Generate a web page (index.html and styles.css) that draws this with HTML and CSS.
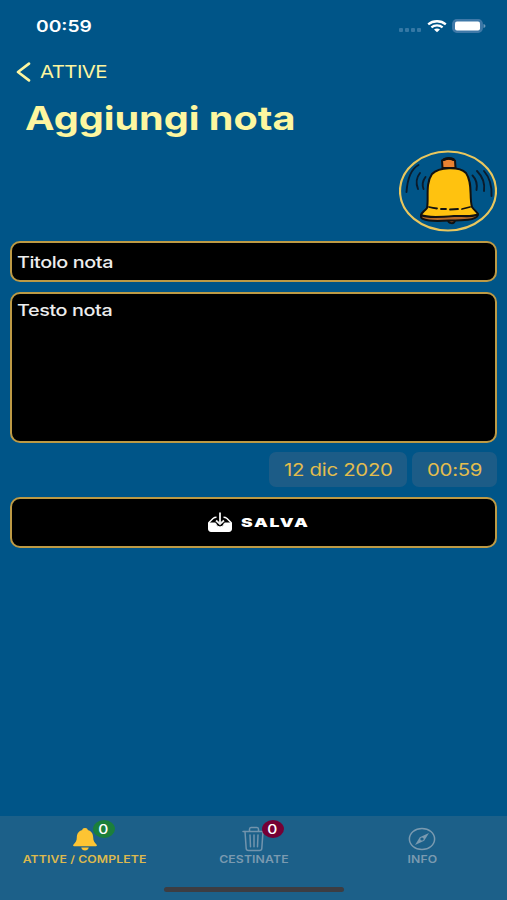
FILE: index.html
```html
<!DOCTYPE html>
<html lang="it">

<head>
  <meta charset="UTF-8" />
  <meta name="viewport" content="width=device-width, initial-scale=1.0" />
  <title>Aggiungi nota</title>
  <link rel="stylesheet" href="styles.css">
</head>

<body>
  <div class="app">
    <div class="status-bar">
      <span class="clock wide">00:59</span>
      <div class="status-icons">
        <div class="signal"><i></i><i></i><i></i><i></i></div>
        <svg class="wifi" width="20" height="13" viewBox="0 0 20 13" fill="none" stroke="#fff" stroke-width="2.3">
          <path d="M1.2 4.4C6 .2 14 .2 18.8 4.4" />
          <path d="M4.4 7.4C7.5 4.8 12.5 4.8 15.6 7.4" />
          <path d="M7 9.5C8.7 8 11.3 8 13 9.5L10 12.2Z" fill="#fff" stroke="none" />
        </svg>
        <svg class="battery" width="34" height="14" viewBox="0 0 34 14">
          <rect x=".8" y=".8" width="29.4" height="12.4" rx="4" fill="#3f79a8" stroke="#3f79a8" stroke-width="1.4" />
          <rect x="3" y="2.6" width="25" height="8.8" rx="2" fill="#fff" />
          <path d="M31.500 5Q33.500 5.500 33.500 7T31.500 9Z" fill="#6c99bc" />
        </svg>
      </div>
    </div>

    <a class="back" href="#">
      <svg width="15" height="20" viewBox="0 0 15 20" fill="none" stroke="#fdf6a0" stroke-width="2.6" stroke-linecap="round" stroke-linejoin="round">
        <path d="M13 1.6L2 10L13 18.4" />
      </svg>
      <span class="wide">ATTIVE</span>
    </a>
    <h1><span class="wide">Aggiungi nota</span></h1>

    <div class="bell-row">
      <svg width="98" height="82" viewBox="0 0 98 82" fill="none" stroke-linecap="round" stroke-linejoin="round">
        <ellipse cx="49" cy="41" rx="48" ry="39.5" stroke="#e9c75e" stroke-width="2.2" />
        <g stroke="#0a1b2b" stroke-width="1.9">
          <path d="M19.500 15C12 19 8.500 28 7.500 42" />
          <path d="M21 23C17 28 17 34 19 39" />
          <path d="M26.500 27C23.500 31 23 35 24.500 39" />
          <path d="M73.500 25.500C78 30 78.500 34 77.500 40" />
          <path d="M78 21C84 27 86 34 85 41" />
          <path d="M85 21C91 28 93 37 92.500 46" />
        </g>
        <g stroke="#111" stroke-width="2">
          <path d="M49 69C48 74 57 75 56 69Z" fill="#a65a2d" />
          <path d="M22 66C21 71 35 71.500 50 70.500C64 70.500 77 70.500 79 65L78 63L23 64Z" fill="#b76b2a" />
          <path d="M28 58C30 49 26 34 33 24C40 17 60 16 67 23C74 33 70 47 73 57C75 60 78 62 79 64C76 67 68 66 55 66C43 67 28 68 22 65C23 62 26 61 28 58Z" fill="#ffc20f" />
          <path d="M43 10.500Q50 7 56 10.500L56.500 18H43.500Z" fill="#e98232" />
          <path d="M45 9.500Q50 7 54.500 9.500" stroke-width="2.6" />
          <path d="M30 57Q34 58 38 58.500M42 59H47M51 59.500L59 59M63 59L71 57" stroke-width="1.800" />
        </g>
      </svg>
    </div>

    <form class="note-form">
      <div class="box title-box"><span class="wide">Titolo nota</span></div>
      <div class="box text-box"><span class="wide">Testo nota</span></div>
      <div class="date-row">
        <div class="chip date-chip"><span class="wide">12 dic 2020</span></div>
        <div class="chip time-chip"><span class="wide">00:59</span></div>
      </div>
      <div class="box save-box">
        <svg width="26" height="21" viewBox="0 0 26 21" fill="none">
          <path d="M1.500 11H8.500Q9.500 15 13 15T17.500 11H24.500V17Q24.500 19.500 22 19.500H4Q1.500 19.500 1.500 17Z" fill="#fff" stroke="#fff" stroke-width="1" stroke-linejoin="round" />
          <path d="M1.500 11L6 6.500Q7.500 5.200 9.500 5.200M24.500 11L20 6.500Q18.500 5.200 16.500 5.200" stroke="#fff" stroke-width="1.500" />
          <path d="M13 .5V11" stroke="#ddd" stroke-width="2" />
          <path d="M9 8.500L13 12L17 8.500" stroke="#eee" stroke-width="1.800" />
        </svg>
        <span class="save-label wide">SALVA</span>
      </div>
    </form>

    <nav class="tab-bar">
      <a class="tab on" href="#">
        <div class="tab-icon">
          <svg width="26" height="24" viewBox="0 0 26 24" fill="#fdc433">
            <path d="M13 1C10.700 1 10.300 2 10.300 3C6.500 4 4.800 7 4.800 10.500C4.800 14 3.500 15.500 1.500 17.500Q.3 19.200 2 19.300H24Q25.700 19.200 24.500 17.500C22.500 15.500 21.200 14 21.200 10.500C21.200 7 19.500 4 15.700 3C15.700 2 15.300 1 13 1Z" />
            <path d="M9.200 20.500H16.800Q16 23.400 13 23.400T9.200 20.500Z" />
          </svg>
          <b class="badge green"><span class="wide">0</span></b>
        </div>
        <span class="tab-label wide">ATTIVE / COMPLETE</span>
      </a>
      <a class="tab" href="#">
        <div class="tab-icon">
          <svg width="24" height="26" viewBox="0 0 24 26" fill="none" stroke="#7294ad" stroke-width="1.5" stroke-linecap="round" stroke-linejoin="round">
            <path d="M1 5.500H23M7.500 5.500V3.300Q7.500 1.500 9 1.500H15Q16.500 1.500 16.500 3.300V5.500" />
            <path d="M3 5.500L4.200 22.500Q4.400 24.600 6.500 24.600H17.500Q19.600 24.600 19.800 22.500L21 5.500" />
            <path d="M8 9L8.500 20.800M12 9V20.800M16 9L15.500 20.800" />
          </svg>
          <b class="badge red"><span class="wide">0</span></b>
        </div>
        <span class="tab-label wide">CESTINATE</span>
      </a>
      <a class="tab" href="#">
        <div class="tab-icon">
          <svg width="28" height="24" viewBox="0 0 28 24" fill="none" stroke="#7a9ab0" stroke-width="1.5">
            <ellipse cx="14" cy="12" rx="12.6" ry="10.6" />
            <path d="M21 6L16.200 13.800L7 18L11.800 10.200Z" fill="#7a9ab0" stroke="none" />
            <ellipse cx="14" cy="12" rx="1.7" ry="1.5" fill="#1c6089" stroke="none" />
          </svg>
        </div>
        <span class="tab-label wide">INFO</span>
      </a>
      <div class="home-line"></div>
    </nav>
  </div>
</body>

</html>
```
FILE: styles.css
```css
html, body, h1, form {
  padding: 0;
  margin: 0;
}
* {
  box-sizing: border-box;
}
a {
  color: inherit;
  text-decoration: none;
}
svg {
  display: block;
  flex: none;
}

.app {
  width: 507px;
  height: 900px;
  display: flex;
  flex-direction: column;
  overflow: hidden;
  background-color: #005588;
  font-family: Inter, "Liberation Sans", sans-serif;
  color: #fdf6a0;
}

/* extended letterforms */
.wide {
  display: inline-block;
  white-space: nowrap;
  transform: scaleX(1.2);
  transform-origin: 0 50%;
}

.status-bar {
  height: 52px;
  padding: 0 21px 0 36px;
  display: flex;
  align-items: center;
  justify-content: space-between;
  color: #fff;
}
.clock {
  font-size: 15.5px;
  font-weight: 600;
  transform: scaleX(1.24);
}
.status-icons {
  display: flex;
  align-items: center;
}
.signal {
  display: flex;
  gap: 2px;
  padding-top: 8px;
  margin-right: 6px;
}
.signal i {
  width: 4px;
  height: 4px;
  border-radius: 1px;
  background-color: #3578a5;
}
.wifi {
  margin-right: 5px;
}

.back {
  height: 38px;
  padding: 2px 0 0 16px;
  display: flex;
  align-items: center;
  gap: 9px;
  font-size: 17px;
  letter-spacing: -.5px;
}
h1 {
  height: 56px;
  padding-left: 25px;
  font-size: 33px;
  line-height: 56px;
  font-weight: 700;
}
.bell-row {
  display: flex;
  justify-content: flex-end;
  height: 91px;
  padding: 4px 10px 0 0;
}

.note-form {
  padding: 4px 10px 0;
}
.box {
  border: 2px solid #bd9a45;
  border-radius: 10px;
  background-color: #000;
  color: #ededed;
  font-size: 16.5px;
  font-weight: 500;
  line-height: 20px;
  letter-spacing: -.35px;
}
.title-box {
  height: 41px;
  padding: 9px 5px;
}
.text-box {
  height: 151px;
  margin-top: 10px;
  padding: 6px 5px;
}
.date-row {
  display: flex;
  justify-content: flex-end;
  gap: 5px;
  margin-top: 9px;
}
.chip {
  height: 35px;
  padding-left: 15px;
  border-radius: 7px;
  background-color: #1c5c87;
  color: #e3bd4e;
  font-size: 17px;
  line-height: 36px;
  letter-spacing: -.25px;
}
.date-chip {
  width: 138px;
}
.time-chip {
  width: 85px;
}
.save-box {
  height: 51px;
  margin-top: 10px;
  padding-left: 195px;
  display: flex;
  align-items: center;
  gap: 8px;
}
.save-label {
  color: #fff;
  font-size: 12px;
  font-weight: 900;
  letter-spacing: 1.2px;
  transform: scaleX(1.46);
}

.tab-bar {
  height: 84px;
  margin-top: auto;
  padding-top: 9px;
  display: grid;
  grid-template-columns: 169px 169px 168px;
  background-color: #1c6089;
  position: relative;
}
.tab {
  display: flex;
  flex-direction: column;
  align-items: center;
  color: #7a9ab0;
}
.tab.on {
  color: #dcb94e;
}
.tab-icon {
  height: 27px;
  display: flex;
  align-items: center;
  position: relative;
}
.tab-label {
  font-size: 10.2px;
  line-height: 14px;
  font-weight: 600;
  letter-spacing: .1px;
  transform-origin: 50% 50%;
}
/* counter over the tab icon */
.badge {
  position: absolute;
  top: -5px;
  left: 21px;
  width: 22px;
  height: 18px;
  border-radius: 50%;
  color: #fff;
  font-size: 13px;
  line-height: 18px;
  font-weight: 500;
  text-align: center;
}
.badge .wide {
  transform-origin: 50% 50%;
}
.green {
  background-color: #1b7f3b;
}
.red {
  left: 20px;
  background-color: #750035;
}
.home-line {
  position: absolute;
  left: 164px;
  bottom: 8px;
  width: 180px;
  height: 5px;
  border-radius: 3px;
  background-color: #3d3d42;
}
```
